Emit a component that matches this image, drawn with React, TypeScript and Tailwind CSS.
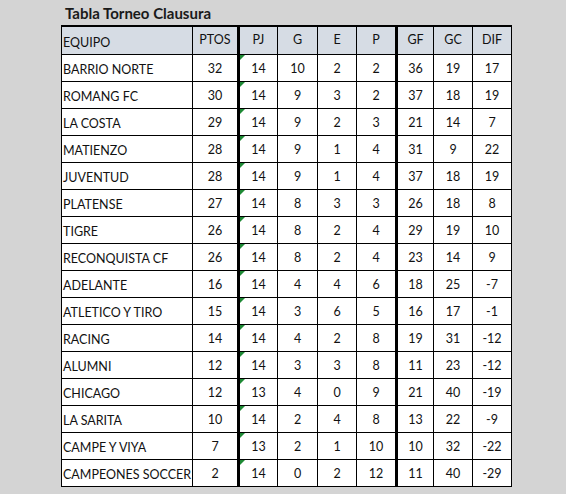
import React from 'react';

type Row = [string, number, number, number, number, number, number, number, number];

const rows: Row[] = [
  ['BARRIO NORTE', 32, 14, 10, 2, 2, 36, 19, 17],
  ['ROMANG FC', 30, 14, 9, 3, 2, 37, 18, 19],
  ['LA COSTA', 29, 14, 9, 2, 3, 21, 14, 7],
  ['MATIENZO', 28, 14, 9, 1, 4, 31, 9, 22],
  ['JUVENTUD', 28, 14, 9, 1, 4, 37, 18, 19],
  ['PLATENSE', 27, 14, 8, 3, 3, 26, 18, 8],
  ['TIGRE', 26, 14, 8, 2, 4, 29, 19, 10],
  ['RECONQUISTA CF', 26, 14, 8, 2, 4, 23, 14, 9],
  ['ADELANTE', 16, 14, 4, 4, 6, 18, 25, -7],
  ['ATLETICO Y TIRO', 15, 14, 3, 6, 5, 16, 17, -1],
  ['RACING', 14, 14, 4, 2, 8, 19, 31, -12],
  ['ALUMNI', 12, 14, 3, 3, 8, 11, 23, -12],
  ['CHICAGO', 12, 13, 4, 0, 9, 21, 40, -19],
  ['LA SARITA', 10, 14, 2, 4, 8, 13, 22, -9],
  ['CAMPE Y VIYA', 7, 13, 2, 1, 10, 10, 32, -22],
  ['CAMPEONES SOCCER', 2, 14, 0, 2, 12, 11, 40, -29],
];

// column widths incl. left border
const cols = [
  'w-[131px] border-l',
  'w-[45px] border-l',
  'w-[40px] border-l-[3px]',
  'w-[40px] border-l',
  'w-[39px] border-l',
  'w-[39px] border-l',
  'w-[38px] border-l-[3px]',
  'w-[39px] border-l',
  'w-[39px] border-l',
];

const heads = ['EQUIPO', 'PTOS', 'PJ', 'G', 'E', 'P', 'GF', 'GC', 'DIF'];

export default function App() {
  return (
    <div
      className="w-[566px] h-[494px] bg-[#d4d4d4] pl-[61px] pt-[3px] text-[#111]"
      style={{ fontFamily: 'Lato, "Open Sans", sans-serif' }}
    >
      <div className="pl-[4px] h-[22px] text-[15px] font-bold leading-[20px] text-[#1a1a1a]">Tabla Torneo Clausura</div>
      <div className="w-[451px] border-t-2 border-r border-black bg-white text-[12.5px]">
        <div className="flex h-[28px] border-b border-black bg-[#d6dce4]">
          {heads.map((h, i) => (
            <div
              key={h}
              className={`${cols[i]} border-black flex ${i === 0 ? 'items-end pl-[1px] pb-[1px]' : 'items-center justify-center'}`}
            >
              {h}
            </div>
          ))}
        </div>
        {rows.map((r) => (
          <div key={r[0]} className="flex h-[27px] border-b border-black">
            {r.map((v, i) => (
              <div
                key={i}
                className={`${cols[i]} border-black relative flex ${i === 0 ? 'items-end pl-[1px] pb-[1px]' : 'items-center justify-center pt-[2px]'}`}
              >
                {i === 2 && (
                  <span className="absolute left-0 top-0 w-0 h-0 border-t-[5px] border-r-[5px] border-t-[#1e8a35] border-r-transparent" />
                )}
                {v}
              </div>
            ))}
          </div>
        ))}
      </div>
    </div>
  );
}
